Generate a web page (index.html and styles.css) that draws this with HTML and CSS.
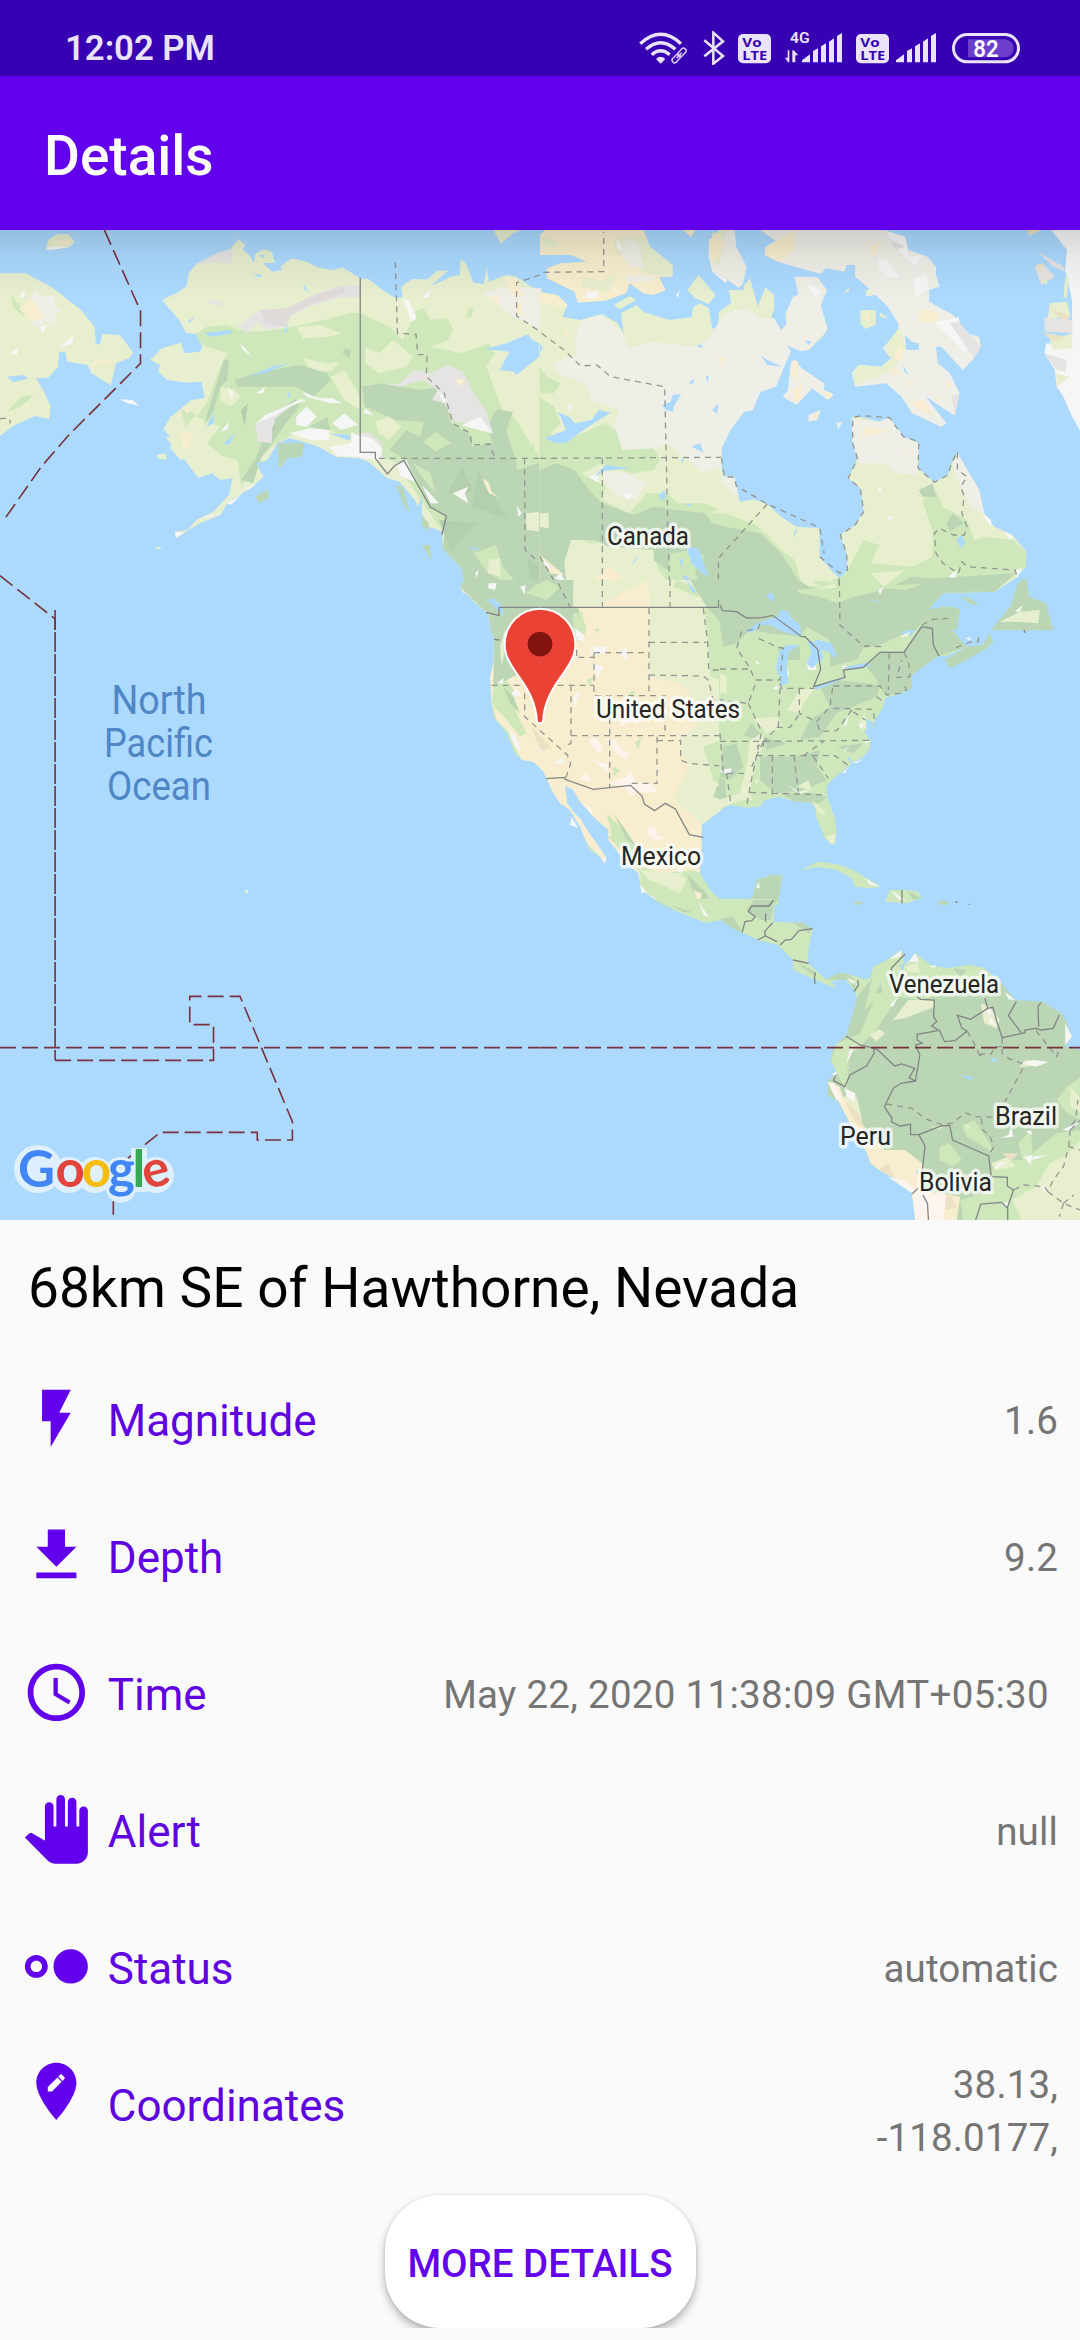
FILE: index.html
```html
<!DOCTYPE html>
<html lang="en">
<head>
<meta charset="utf-8">
<title>Details</title>
<link rel="stylesheet" href="styles.css">
</head>
<body>
<div class="screen">
  <header class="statusbar">
    <span class="clock">12:02 PM</span>
    <div class="indicators">
      <svg class="wifi" viewBox="118 92 146 104">
        <g fill="none" stroke="#ebe3f9" stroke-width="10">
          <path d="M122 130Q183 74 244 130"/><path d="M139 147Q183 108 227 147"/><path d="M156 163Q183 140 210 163"/>
        </g>
        <path d="M169 176Q183 163 197 176L183 190Z" fill="#ebe3f9"/>
        <g fill="none" stroke="#3700b3" stroke-width="12"><rect x="214" y="157" width="48" height="17" rx="8" transform="rotate(-47 238 165)"/></g>
        <g fill="none" stroke="#d7c8f2" stroke-width="4.5" transform="rotate(-47 238 165)"><rect x="211" y="158" width="29" height="15" rx="7"/><rect x="236" y="158" width="29" height="15" rx="7"/><path d="M227 165.500h22"/></g>
      </svg>
      <svg class="bt" viewBox="308 92 66 104"><path d="M312 120L368 167L339 190V97L368 123L312 168" fill="none" stroke="#ebe3f9" stroke-width="7.500"/></svg>
      <svg class="volte" viewBox="414 92 99 104"><rect x="414" y="101" width="99" height="88" rx="15" fill="#ebe3f9"/><text x="427" y="139" class="vo" textLength="58" lengthAdjust="spacingAndGlyphs">Vo</text><text x="427" y="179" class="vo" textLength="75" lengthAdjust="spacingAndGlyphs">LTE</text></svg>
      <svg class="sig4" viewBox="555 92 172 104">
        <text x="570" y="128" class="g4" textLength="59" lengthAdjust="spacingAndGlyphs">4G</text>
        <path d="M555 172h8v-22h5v36h-4zM577 186v-36h4l14 15h-9v21z" fill="#ebe3f9"/>
        <path d="M606 186v-6l24-18v24zM639 186v-34l15-8v42zM663 186v-48l15-9v57zM687 186v-62l15-10v72zM711 186v-79l15-9v88z" fill="#ebe3f9"/>
      </svg>
      <svg class="volte" viewBox="414 92 99 104"><rect x="414" y="101" width="99" height="88" rx="15" fill="#ebe3f9"/><text x="427" y="139" class="vo" textLength="58" lengthAdjust="spacingAndGlyphs">Vo</text><text x="427" y="179" class="vo" textLength="75" lengthAdjust="spacingAndGlyphs">LTE</text></svg>
      <svg class="sig" viewBox="606 92 121 104"><path d="M606 186v-6l24-18v24zM639 186v-34l15-8v42zM663 186v-48l15-9v57zM687 186v-62l15-10v72zM711 186v-79l15-9v88z" fill="#ebe3f9"/></svg>
      <svg class="batt" viewBox="1056 92 204 104"><rect x="1060.500" y="102.500" width="195" height="82" rx="41" fill="none" stroke="#ebe3f9" stroke-width="9"/><path d="M1104 117h110a27 27 0 0 1 0 54h-110z" fill="#6b3fcb"/><text x="1120" y="170" class="pct" textLength="76" lengthAdjust="spacingAndGlyphs">82</text></svg>
    </div>
  </header>
  <div class="appbar"><h1>Details</h1></div>

  <div class="map">
  <svg class="mapart" viewBox="0 230 1080 990" preserveAspectRatio="none">
    <defs>
      <linearGradient id="shade" x1="0" y1="0" x2="0" y2="1"><stop offset="0" stop-color="#000" stop-opacity=".13"/><stop offset=".4" stop-color="#000" stop-opacity=".05"/><stop offset="1" stop-color="#000" stop-opacity="0"/></linearGradient>
    </defs>
    <rect y="230" width="1080" height="990" fill="#acdaff"/>

    <!-- Siberia, Alaska, Yukon -->
    <g transform="translate(0 230) scale(.34439 .33333)">
      <g class="lt">
        <path d="M0 130L75 130L155 175L235 240L275 290L278 340L290 345L297 312L348 315L387 368L375 385L337 400L322 466L265 430L255 405L225 400L195 395L190 365L172 367L168 412L140 443L105 445L125 480L147 528L143 567L100 558L35 590L0 618Z"/>
        <path d="M133 60L140 30L165 13L198 12L217 35L205 50L165 57Z"/>
        <path d="M470 210L520 185L542 168L548 130L570 102L630 70L665 62L693 27L712 45L705 60L725 75L738 100L742 70L765 58L790 65L795 90L810 115L830 95L850 85L895 97L920 112L965 120L995 112L1045 145L1072 148L1110 180L1150 205L1170 200L1165 170L1195 148L1240 148L1270 122L1300 122L1260 160L1245 170L1310 140L1335 135L1338 87L1352 100L1375 158L1405 162L1413 112L1420 155L1470 135L1500 140L1572 190L1572 1200L1430 1200L1415 1150L1380 1120L1335 1070L1350 1060L1340 1015L1285 955L1285 905L1245 890L1222 850L1205 810L1160 755L1125 745L1070 695L1040 685L975 680L925 650L880 635L840 625L805 640L780 685L755 705L765 740L735 770L710 785L660 820L640 855L580 880L510 925L508 905L545 900L570 870L620 845L665 795L675 745L640 750L615 730L575 743L572 715L560 680L525 690L495 655L497 625L475 598L495 560L515 545L555 510L595 505L585 455L545 458L485 450L460 425L465 405L436 390L470 355L525 338L535 370L580 365L588 350L570 312L540 308L520 270Z"/>
        <path d="M455 675L480 670L485 688L460 688ZM452 950L470 952L460 960ZM1433 0L1515 0L1490 10L1455 42Z"/>
      </g>
      <path class="gr" d="M570 312L600 290L660 285L700 300L760 305L850 290L960 265L1020 248L1046 250L1070 262L1130 290L1170 330L1210 240L1230 235L1250 270L1300 265L1315 300L1300 330L1250 350L1340 370L1420 340L1435 370L1410 400L1425 450L1460 540L1500 570L1540 640L1572 690L1572 1000L1340 1000L1285 905L1150 700L1070 660L960 600L860 610L800 640L740 700L700 770L690 690L650 680L600 640L640 590L570 560L600 520L640 410L660 370L600 350L575 330Z"/>
      <path class="gr" d="M1360 235L1375 232L1370 260L1355 262ZM30 195L60 230L90 225L70 260L40 235ZM60 500L100 495L60 530L20 545ZM525 540L570 550L540 590ZM1330 380L1440 370L1400 420Z"/>
      <path class="lt" d="M860 290L930 285L990 310L960 320L880 325ZM880 385L950 400L985 395L960 425L900 420ZM960 440L1000 420L1046 500L1046 540L1000 510ZM640 470L680 480L700 500L670 530L640 510ZM1060 350L1100 370L1140 330L1200 380L1180 410L1100 430L1060 400ZM1090 575L1130 560L1165 590L1130 630L1100 610ZM480 620L560 630L600 690L640 700L615 730L575 743L530 680Z"/>
      <path class="dk" d="M650 390L665 390L660 450L640 470L620 540L595 585L600 560ZM680 450L740 430L870 405L950 430L960 450L910 500L860 470L780 470L690 470ZM1000 355L1020 360L1015 385L995 370ZM790 560L860 505L870 530L830 580L790 640L760 680L735 760L700 750L740 690ZM1050 470L1110 460L1220 480L1280 470L1300 540L1310 580L1370 620L1370 650L1430 640L1415 590L1440 540L1490 545L1470 600L1500 700L1572 700L1572 1150L1415 1150L1335 1070L1350 1060L1340 1015L1285 955L1297 860L1250 830L1180 690L1130 660L1180 600L1220 620L1230 575L1150 570L1060 530ZM805 640L885 640L875 680L835 685L810 718ZM1150 765L1170 770L1190 850L1175 830ZM1225 855L1245 880L1245 905L1225 885ZM1225 945L1248 945L1253 990ZM740 800L775 780L783 800L755 820ZM900 590L950 560L960 600Z"/>
      <path class="gr" d="M1230 635L1265 605L1310 640L1265 665ZM1375 970L1440 945L1460 1010L1500 1060L1450 1050L1410 1020ZM1200 700L1250 730L1265 790L1225 740ZM1500 660L1550 640L1560 700L1500 720Z"/>
      <path class="dk2" d="M1340 710L1375 780L1340 800L1300 790ZM1390 720L1475 870L1400 840L1370 830ZM1275 870L1385 880L1310 965ZM790 560L800 600L775 600ZM1450 1070L1480 1060L1490 1110L1450 1100ZM1530 980L1568 1010L1568 1100L1540 1060ZM700 540L720 520L710 590Z"/>
      <path class="lt" d="M1420 990L1450 985L1455 1040L1415 1030ZM1525 850L1572 845L1572 905L1530 900Z"/>
      <path class="rock" d="M570 102L630 70L678 55L670 102L630 95ZM600 212L640 212L650 230L610 222ZM690 290L720 265L755 240L830 238L880 210L930 185L1000 165L1046 168L1046 200L980 205L900 230L840 260L830 290L770 300L750 275L720 310ZM740 580L790 545L870 510L800 565L790 600L790 640L750 635ZM1040 610L1075 608L1110 640L1110 690L1040 685ZM1110 460L1160 462L1200 420L1250 430L1300 405L1345 425L1375 490L1410 540L1432 610L1390 600L1370 580L1320 575L1290 520L1255 510L1270 480L1230 450L1160 470Z"/>
      <path class="ice" d="M1405 190L1460 170L1572 175L1572 300L1490 260ZM75 235L100 180L120 200L160 195L160 230L180 235L160 255L160 290L130 275L110 290L90 280Z"/>
      <path class="mauve" d="M755 240L830 235L930 190L1000 170L1000 190L900 225L845 255L830 290L770 280Z"/>
      <path class="wh" d="M695 335L733 380L705 360ZM640 605L665 575L660 600L615 610ZM745 580L770 555L830 530L870 508L890 510L840 530L800 555ZM860 560L890 530L920 560L890 590L860 585ZM880 485L925 505L965 505L995 520L960 520L890 500ZM840 610L900 595L955 600L955 630L900 630ZM955 650L1020 640L1020 605L1046 620L1046 680L980 678ZM965 580L1000 550L1040 585L990 600ZM1045 615L1080 625L1110 655L1105 690L1046 685ZM1060 535L1085 555L1055 550ZM508 905L535 908L512 922ZM580 865L640 850L610 862ZM660 820L700 795L670 825ZM710 775L740 765L720 780ZM1170 205L1190 215L1210 265L1195 275ZM1225 765L1275 820L1250 820ZM1150 700L1180 690L1205 755L1165 740ZM1270 485L1300 500L1290 520ZM1340 585L1395 560L1430 610L1390 600ZM1315 790L1360 770L1350 790L1360 820ZM1500 825L1515 850L1505 860ZM1380 1030L1390 1018L1385 1045ZM1412 1060L1445 1065L1435 1080ZM1510 1070L1525 1065L1522 1095ZM348 508L385 510L404 527L370 520ZM55 200L75 178L70 205ZM170 355L215 312L210 340ZM115 290L135 285L125 310ZM135 60L150 50L205 50L165 57ZM660 470L678 490L672 510ZM30 370L52 350L50 375ZM1225 205L1250 175L1245 200ZM745 490L770 470L765 490Z"/>
      <path class="sand" d="M55 235L90 205L130 260L90 275ZM525 610L558 608L552 640L530 640ZM525 640L555 645L535 665ZM1465 140L1500 145L1520 200L1480 190ZM1500 220L1520 215L1515 260L1500 250ZM1400 745L1418 755L1428 785L1445 800L1420 790ZM1320 450L1350 445L1340 470ZM160 35L200 25L205 40L180 48ZM260 405L310 385L330 395ZM530 530L550 530L545 555ZM1410 200L1450 195L1450 220Z"/>
      <path class="wt" d="M1405 358L1470 340L1535 312L1540 325L1572 345L1572 375L1530 410L1500 435L1492 425L1450 420L1480 365ZM20 440L70 435L82 445L40 457ZM735 130L760 135L755 145ZM750 75L770 75L765 85ZM765 100L800 98L820 120L790 125ZM880 160L895 185L885 180ZM545 275L567 258L550 280ZM590 310L670 300L675 310L615 320ZM825 305L837 280L832 310ZM720 440L790 410L840 400L770 428ZM835 505L838 480L843 500ZM600 590L620 545L620 580ZM650 640L685 610L665 645ZM955 610L1015 615L1015 632ZM1355 955L1400 953L1380 960ZM1415 1100L1450 1120L1465 1160L1440 1130ZM745 700L780 690L760 735ZM1205 850L1225 800L1225 860Z"/>
      <path class="bd" d="M1046 143V667H1090V685L1125 732L1145 708L1173 691L1250 832L1296 858L1283 915M1412 1148L1447 1156V1132H1570"/>
      <path class="dash" d="M1148 97L1154 310L1208 313L1213 374H1240L1238 440L1290 490L1315 580L1365 610L1370 645L1422 642L1437 685M1100 685H1570M1523 685L1525 960L1568 1000M1568 135L1500 158V258L1568 305M0 566L28 565L30 580"/>
      <path class="lim" d="M303 0L408 243V400L200 615L120 710L8 875M0 1037L160 1167V1200"/>
    </g>

    <!-- Canadian Arctic, Hudson Bay, Greenland -->
    <g transform="translate(540 230) scale(.34439 .33333)">
      <path class="lt" d="M-2 185L50 195L80 225L65 260L115 270L180 252L225 280L243 310L235 250L280 225L300 245L375 270L440 262L445 230L465 220L490 235L500 295L515 297L520 245L555 220L548 180L580 180L610 145L622 190L632 230L655 172L680 195L680 235L672 260L700 300L715 285L712 245L718 240L735 200L750 195L740 140L805 142L833 180L815 225L818 260L835 295L825 315L780 360L755 362L715 345L728 365L700 405L705 420L685 470L640 485L620 510L618 540L592 545L550 605L527 655L527 710L535 740L565 740L580 815L620 808L660 822L700 860L745 890L812 895L812 980L850 1025L870 1045L893 1020L890 970L872 915L915 885L940 845L930 775L895 745L922 685L908 640L905 565L915 557L985 575L1015 563L1055 620L1100 640L1098 715L1145 757L1185 735L1195 700L1212 668L1240 720L1275 780L1290 850L1320 890L1372 915L1412 965L1410 1010L1380 1045L1320 1085L1170 1090L1120 1120L1060 1200L-2 1200Z"/>
      <path class="ice" d="M115 275L180 255L240 310L255 355L320 335L450 350L490 320L540 250L600 235L640 265L680 265L700 300L715 285L718 240L735 200L750 195L740 140L805 142L833 180L815 225L835 295L780 360L755 362L715 345L728 365L705 420L685 470L640 485L618 540L592 545L550 605L527 655L527 740L565 740L575 800L530 760L520 710L470 730L430 690L370 640L310 670L240 660L210 600L230 540L150 510L130 460L50 430L40 400L110 370L100 340ZM905 565L985 575L1015 563L1055 620L1100 640L1095 735L1040 730L1000 700L925 700L908 640ZM1200 700L1212 668L1275 780L1290 850L1250 830L1210 740ZM180 725L250 730L310 760L280 810L230 800L190 760Z"/>
      <g class="ice">
        <path d="M490 40L520 0L565 0L570 50L600 110L585 180L545 150L500 125L490 80Z"/>
        <path d="M640 0L990 0L1060 20L1070 60L1125 80L1150 110L1150 135L1160 170L1130 180L1130 215L1200 255L1240 310L1275 320L1280 350L1260 385L1228 420L1165 350L1150 350L1155 400L1190 430L1218 490L1205 557L1120 500L1180 580L1165 590L1080 550L1050 500L1005 460L915 470L905 430L925 405L990 410L1020 385L995 355L1040 310L1040 280L1010 230L975 195L945 200L955 175L915 140L915 105L890 105L885 125L830 115L815 132L740 110L690 95L652 75L655 50L700 45Z"/>
        <path d="M738 388L760 415L825 460L825 480L853 495L835 510L790 475L745 525L705 500L720 480L728 400Z"/>
        <path d="M780 555L815 540L805 570L780 575ZM860 578L878 576L866 600Z"/>
      </g>
      <path class="sand" d="M0 15L15 0L300 0L320 50L385 105L385 140L345 140L365 180L330 195L300 190L260 160L250 190L190 212L110 218L100 185L20 145L20 115L60 100L135 95L90 75L0 75ZM-2 190L50 195L80 225L60 235L0 215ZM415 0L450 0L440 22Z"/>
      <path class="lt" d="M0 20L30 25L60 50L20 50ZM215 20L300 20L320 50L385 105L385 140L300 130L260 90L215 60ZM120 140L180 150L220 130L200 190L120 170ZM428 180L460 135L510 195L490 222L450 205ZM930 240L975 240L975 285L945 297L930 280ZM880 190L900 170L895 185ZM985 245L1010 265L990 262ZM1000 350L1045 290L1060 350L1040 400L1010 430L915 465L908 430L925 405L990 410L1020 385ZM215 225L260 198L280 210L230 238ZM945 180L970 185L950 198ZM500 10L540 0L520 110L497 90Z"/>
      <path class="ice" d="M230 60L260 20L290 50L300 110L260 110ZM250 135L340 140L320 155L250 155Z"/>
      <path class="sand" d="M690 30L740 0L740 60L700 95L655 75L655 50ZM490 30L520 10L540 40L500 100ZM960 50L990 30L970 80ZM1095 275L1110 235L1160 250L1155 280ZM1030 360L1050 345L1055 385L1030 395ZM1070 515L1110 510L1150 560L1100 535ZM735 390L750 395L745 445L727 440ZM735 475L760 465L760 500L742 522ZM820 480L850 490L840 508ZM785 560L812 545L805 565ZM938 260L955 250L955 280ZM1010 415L1045 420L1030 445ZM1060 450L1085 455L1070 470ZM1175 460L1190 455L1190 480ZM1150 495L1165 505L1155 515ZM520 380L540 385L530 415ZM70 300L90 310L75 325ZM1050 655L1065 660L1055 670ZM945 590L1020 600L930 625Z"/>
      <path class="wh" d="M980 85L1010 90L1045 145L1010 140L985 115ZM1145 275L1185 270L1215 260L1225 310L1250 340L1235 370L1200 330L1160 295ZM1085 150L1120 130L1130 175L1090 200ZM1000 0L1060 20L1070 80L1110 75L1090 110L1040 60ZM135 185L168 185L165 205L135 205ZM225 25L240 60L222 55ZM395 195L405 180L402 205ZM1485 0L1572 0L1572 610L1545 560L1520 500L1500 470L1495 420L1465 370L1470 340L1545 350L1545 210L1525 120L1530 60ZM110 755L170 730L170 785ZM240 790L270 795L255 812ZM980 780L993 768L988 790ZM1200 940L1240 945L1230 960L1195 955ZM1280 848L1310 870L1310 890ZM1350 905L1375 920L1365 930ZM1010 860L1025 855L1015 875ZM225 860L238 848L230 875ZM585 980L600 975L595 995ZM80 530L92 520L88 550ZM200 165L220 180L230 195ZM500 125L545 150L540 160ZM770 160L820 180L800 200Z"/>
      <path class="rock" d="M1445 65L1520 110L1525 125L1490 110ZM1437 110L1460 100L1495 140L1455 165ZM1465 260L1545 270L1545 310L1465 305ZM1465 370L1530 390L1525 425L1500 420ZM1190 280L1215 275L1280 350L1260 385ZM1020 30L1060 50L1030 60ZM1195 500L1218 490L1205 557Z"/>
      <path class="lt" d="M1480 220L1530 215L1540 260L1475 265ZM1480 330L1545 310L1545 355L1490 360ZM1500 430L1540 440L1500 470ZM1525 140L1535 140L1530 205L1520 200ZM1455 150L1475 150L1470 165Z"/>
      <path class="beige" d="M1470 228L1540 260L1525 275ZM1462 308L1530 320L1490 335ZM1440 105L1462 100L1455 135ZM1415 0L1455 0L1420 18Z"/>
      <path class="gr" d="M-2 500L40 530L60 580L30 610L60 640L100 620L190 580L220 600L240 660L330 655L350 690L330 720L270 730L200 710L180 700L120 730L190 770L180 810L260 850L310 790L370 790L400 820L480 820L540 850L620 880L680 930L740 990L760 1060L870 1045L893 1020L940 930L985 945L960 1000L1080 1010L1140 980L1140 900L1110 810L1150 780L1170 830L1240 870L1260 930L1290 920L1372 930L1412 965L1410 1010L1320 1085L1170 1090L1090 1170L-2 1200ZM-2 410L20 440L60 460L40 490L0 490Z"/>
      <path class="lt" d="M490 850L540 850L640 890L700 960L740 990L760 1060L820 1090L860 1070L840 1030L700 860L580 815ZM150 940L270 930L330 960L340 1010L390 1090L480 1100L500 1132L500 1200L-2 1200L-2 950L80 920ZM1000 1070L1060 1020L960 1030ZM770 1040L860 1060L790 1080Z"/>
      <path class="dk" d="M-2 720L50 700L100 720L150 790L180 820L270 855L330 830L400 840L480 850L500 880L540 890L640 910L700 970L750 1050L830 1100L900 1110L1000 1080L1080 1040L1140 1045L1220 1040L1380 1030L1320 1085L1170 1090L1120 1150L1060 1200L500 1200L480 1130L450 1020L480 980L440 960L380 970L370 1020L330 990L330 960L200 950L160 930L90 930L70 1000L85 1130L-2 1130ZM1100 780L1140 760L1150 800L1110 800ZM1180 880L1200 850L1230 880L1190 905ZM1310 1200L1380 1110L1412 1040L1420 1100L1470 1120L1490 1200ZM1110 1140L1200 1130L1220 1140L1210 1200L1060 1200ZM1220 1100L1270 1120L1255 1125Z"/>
      <path class="sand" d="M120 1132L180 1080L160 1040L200 1010L240 1040L230 1080L310 1110L300 1200L110 1200ZM0 975L30 1000L70 1035L30 1030Z"/>
      <path class="lt" d="M0 850L25 848L25 895L0 890ZM1340 1165L1450 1150L1450 1178L1370 1178Z"/>
      <path class="wh" d="M40 1045L60 1030L75 1055ZM1185 1040L1210 1020L1205 1045ZM1380 1020L1400 1015L1385 1045ZM1370 1150L1400 1125L1390 1145ZM0 980L30 1010L20 1015Z"/>
      <path class="wt" d="M15 625L75 600L60 560L50 545L85 560L100 580L150 570L170 540L205 548L140 590L75 640L45 640ZM355 525L380 515L385 495L410 492L388 530L388 545L365 540ZM500 540L518 520L514 552ZM640 375L660 390L703 410L660 405ZM432 460L447 445L445 462ZM480 435L490 440L487 460ZM455 350L465 342L475 353ZM158 740L190 705L260 715L190 722ZM345 795L362 780L365 800L355 815ZM440 650L465 640L475 668ZM410 685L418 690L412 700ZM425 825L440 820L435 830ZM425 950L460 955L490 1040L470 1030L440 1000ZM412 1035L430 1040L455 1085L445 1088ZM405 985L415 990L413 1020ZM265 1005L283 978L280 990ZM1060 315L1080 335L1100 340L1100 360L1062 360ZM1055 405L1070 435L1058 425ZM1210 930L1225 915L1235 940L1220 955ZM770 330L790 335L780 345ZM575 175L592 160L590 182ZM655 1100L670 1085L683 1100L675 1118ZM735 930L740 900L748 895ZM960 1110L985 1115L985 1122ZM0 340L8 350L0 370Z"/>
      <path class="dash" d="M10 127L185 125V5M5 310L70 360L118 408L165 405L205 440L362 470L370 840L378 1132M0 685L527 682M181 685V1132M527 685L535 740L565 742L570 768L660 822L812 893L825 970M660 822L518 985V1118M812 980L870 1030L893 1020L890 970L872 915L915 885L940 845L930 775L895 745L922 685L908 640V562L935 557L1015 563L1055 620L1100 635L1098 715L1145 757L1185 735L1195 700L1212 665L1212 720L1240 740L1222 770L1232 800L1225 850L1240 890L1232 915L1200 915L1160 895L1145 910L1150 970L1170 1000L1215 1030L1225 995L1240 1010L1380 1020L1385 1040M868 1045L872 1200M316 1140V1200M472 1132L480 1200M0 980L85 1130M1130 1170L1195 1165"/>
      <path class="bd" d="M0 1132H518V1118L530 1140L570 1145L600 1165L675 1158L735 1200"/>
    </g>

    <!-- Western US and Mexico -->
    <g transform="translate(360 580) scale(.33333)">
      <path class="sand" d="M300 20L330 50L350 70L380 90L385 100L390 140L402 175L400 250L390 290L395 370L410 420L445 455L465 505L485 540L520 545L550 575L580 640L600 670L630 690L660 740L680 790L720 830L735 850L740 835L710 790L685 755L660 715L640 695L622 670L618 640L615 618L640 630L660 665L700 710L745 750L745 780L800 850L835 880L845 930L880 955L930 980L1000 1010L1040 1028L1085 1015L1085 965L1050 930L1020 900L1020 860L1025 790L1025 735L1085 685L1085 40L310 40Z"/>
      <path class="dk" d="M300 20L312 0L640 0L640 82L655 85L670 130L650 180L580 290L480 280L440 300L400 320L402 175L390 140L385 100L350 70Z"/>
      <path class="gr" d="M520 20L560 0L600 20L560 60L500 40ZM400 320L440 300L460 330L470 400L500 460L480 470L440 420L410 390L396 370ZM640 100L665 95L680 150L660 190L640 160ZM740 700L770 730L820 790L850 860L900 880L1000 870L1020 880L1050 930L1085 965L1085 1020L1040 1028L930 980L845 930L840 880L800 830L745 770L755 765ZM395 370L410 420L445 455L480 535L465 520L440 460L400 410ZM700 150L715 145L720 160ZM680 300L700 290L690 320ZM825 490L845 470L835 510ZM680 790L690 810L720 830ZM760 560L780 570L760 590ZM870 240L885 245L860 260ZM805 340L825 330L820 350Z"/>
      <path class="lt" d="M420 200L435 150L440 180L425 260ZM870 82L1085 82L1085 690L1025 735L990 700L940 660L960 610L990 560L960 500L960 470L1010 440L1000 400L990 340L960 310L870 290ZM700 0L870 0L860 40L760 70L640 80L640 20ZM870 0L1085 0L1085 82L870 82ZM840 870L960 880L980 900L960 940L870 900Z"/>
      <path class="gr" d="M1035 82L1085 82L1085 300L1050 290ZM1030 500L1085 480L1085 620L1060 600ZM950 0L1050 40L1010 50L940 20Z"/>
      <path class="dk" d="M990 0L1085 0L1085 130L1040 80ZM1070 620L1085 610L1085 660L1060 650ZM430 320L460 350L480 400L450 370ZM390 0L480 0L470 40L400 30ZM760 700L790 740L830 800L800 780ZM980 880L1010 910L1040 940L1060 990L1000 940ZM880 960L940 975L930 985Z"/>
      <path class="sand" d="M780 60L860 40L830 20L780 40ZM690 90L865 85L865 0ZM1000 930L1025 940L1020 980Z"/>
      <path class="wh" d="M455 340L470 325L485 345L460 350ZM645 145L672 165L670 185L650 180ZM690 200L740 200L735 220L700 225ZM695 250L730 260L715 295ZM775 215L800 205L800 245ZM640 350L660 330L645 385ZM445 450L465 465L485 515L465 500ZM580 550L610 530L610 552ZM535 500L550 505L545 525ZM700 540L745 555L740 575ZM480 20L497 15L495 45ZM385 10L410 10L405 30L385 25ZM840 915L860 935L845 940ZM1015 970L1030 985L1045 1015L1025 1000ZM950 870L970 860L965 880ZM630 735L635 710L655 745ZM725 835L740 835L733 850ZM410 310L430 295L430 310ZM670 280L710 190L700 200Z"/>
      <path class="pink" d="M685 480L710 475L730 510L715 520ZM735 475L765 480L785 510L810 520L800 540L770 520ZM745 610L800 590L810 570L830 610L870 610L895 635L860 640L830 630L820 650L790 620ZM865 740L890 745L890 765L925 778L880 778L865 765ZM670 670L700 690L695 705ZM790 400L810 380L840 405L850 415L830 430L810 425L780 440ZM670 580L690 590L690 605L660 600Z"/>
      <path class="beige" d="M515 440L545 470L570 500L545 515L530 480Z"/>
      <path class="wt" d="M380 60L400 55L425 75L433 115L420 95ZM980 0L1010 40L995 35Z"/>
      <path class="bd" d="M378 97L417 106V82H1076V60L1085 85M402 178L418 180M558 596L615 592V598L700 628L812 616L846 648L853 672L884 692L916 670L946 687L988 764L1030 772"/>
      <path class="dash" d="M727 0V80M930 0V80M595 10L630 80M867 85V347M867 187H1040M1030 85L1043 187L1046 270H1085M867 285L1030 288L1045 300L1060 360H1085M702 218H867M702 218V347H915V467M655 232H702M650 210V232M395 316H702M494 340V410L600 505L622 525L632 550L618 592M633 316V490L612 500M633 467H1085M749 347V625M891 470V610H815M891 482H962V540L985 550L1085 558"/>
    </g>

    <!-- Eastern US, Caribbean -->
    <g transform="translate(720 580) scale(.33333)">
      <path class="gr" d="M-3 40L850 0L810 33L670 38L600 100L545 165L570 170L620 110L665 78L720 88L715 115L695 125L700 155L715 175L740 200L680 228L655 228L620 245L575 285L575 325L545 340L495 355L488 385L465 420L460 445L440 425L435 460L450 480L450 505L430 530L395 550L330 605L318 625L325 660L345 715L350 755L345 790L335 795L315 775L290 715L285 680L265 665L225 665L175 650L135 660L120 680L80 683L30 675L-3 690Z"/>
      <path class="dk" d="M-3 -5L200 0L240 40L300 50L350 70L400 50L450 40L500 25L560 30L640 0L850 0L810 33L670 38L600 100L545 165L480 195L430 205L410 240L370 250L330 260L330 180L260 140L240 170L150 160L90 150L50 190L10 200L-3 120ZM655 228L575 285L575 325L545 340L495 345L470 300L440 260L480 215L550 215L600 140L620 110L665 78L720 88L715 115L695 125L700 155L740 200ZM300 320L350 300L480 315L470 350L400 380L350 400L300 470L240 480L270 420L330 380ZM120 530L230 530L300 510L290 560L320 600L250 630L170 640L120 600ZM10 500L50 490L70 560L30 600L0 590ZM180 640L280 640L320 650L300 670L225 665ZM130 470L200 490L140 510ZM95 430L120 460L100 475L70 465ZM350 500L430 490L400 520ZM170 200L240 200L240 240L190 240ZM-3 590L15 600L20 680L-3 690Z"/>
      <path class="dk" d="M675 240L740 200L790 195L808 160L820 185L795 208L740 240L690 265ZM838 125L870 90L880 50L895 10L912 -5L915 45L970 72L965 100L990 125L980 155L960 130L920 155L900 130ZM720 50L750 55L778 77L760 72ZM395 962L435 968L410 975ZM655 962L683 962L683 974L655 974Z"/>
      <path class="lt" d="M840 125L900 95L960 90L955 130L880 125ZM90 480L130 460L130 500L100 560L90 640L100 660L70 660L30 672L-3 690L-3 660L60 640L80 560ZM200 390L240 330L290 320L250 370L240 400ZM100 415L170 410L190 440L140 460ZM0 280L20 290L20 340L0 340ZM270 0L300 20L260 15ZM275 660L310 690L320 705L295 700ZM320 770L345 760L345 790L330 790ZM435 400L440 450L415 430ZM230 620L265 600L275 630Z"/>
      <path class="gr" d="M245 872L290 845L350 852L400 870L440 895L485 920L450 925L405 920L395 895L350 870L290 860ZM510 930L560 930L595 935L605 955L560 970L495 965ZM-8 968L95 960L110 900L155 885L187 887L175 960L175 975L-8 990ZM520 190L570 155L560 200Z"/>
      <path class="dk" d="M110 900L155 885L187 887L175 960L155 985L95 965ZM560 930L605 955L580 960Z"/>
      <path class="wh" d="M108 925L115 905L120 925ZM105 240L120 250L112 255ZM160 328L168 315L180 328ZM260 245L270 262L285 250L290 270L265 270ZM365 258L380 255L370 270ZM540 170L570 155L560 168ZM0 570L35 565L32 580L5 578ZM200 615L240 635L270 630L240 642ZM370 440L388 400L380 435ZM415 435L430 430L428 450ZM735 175L750 172L755 182ZM885 95L908 75L900 95ZM435 895L480 920L450 915ZM512 930L560 962L535 958ZM105 605L115 598L112 610ZM435 478L450 485L435 490ZM370 510L390 500L375 512ZM365 580L385 562L375 580ZM400 548L428 537L410 550ZM200 265L208 280L203 290ZM475 30L490 22L480 45Z"/>
      <path class="wt" d="M75 158L110 130L170 110L185 88L205 95L215 115L240 135L245 170L190 155L150 135L120 135L100 155ZM175 290L168 260L178 215L200 195L240 195L205 215L200 260L205 310L180 318L182 280ZM262 180L300 190L310 235L275 265L260 250L275 215ZM285 178L335 190L350 225L345 235L325 215L290 205ZM370 262L440 248L455 255L400 270ZM285 318L340 300L380 292L320 318L285 330ZM138 48L152 36L165 50L155 65ZM450 58L480 65L475 70ZM382 525L398 545L390 550ZM438 415L445 450L455 450L460 430Z"/>
      <path class="bd" d="M0 75L8 92L50 95L80 114L125 113L158 106L245 170L255 170L293 208L302 268L281 320L375 292L370 270L430 262L480 217H552L605 140L637 145L640 195L657 228M546 930V970M705 965L713 967M747 972L750 974M912 150L915 158"/>
      <path class="dash" d="M358 0L360 135L430 198L482 200V215M120 130L115 145L65 155L50 205L90 265L105 300H180L190 205L170 200L115 175M0 267H90M105 315L85 370L0 360M85 370L125 455L90 620L80 680M180 310L185 325H283M180 325L175 440L130 485L110 500M238 325V400L290 425L330 380L340 310M170 442H210L240 400M340 318H480L500 345L540 340L560 330L553 316M340 385L460 388L465 435M395 390L350 452L300 455L290 425M0 484H130L450 481M110 527H345L390 560M130 485L95 560M157 527V655M222 527L235 638M280 530L325 595M250 527L310 485M90 637L320 645M0 460L10 580H75M20 580L32 670M508 220L505 330M552 218L565 240L570 290L530 292L545 240M470 350L490 365M605 135L640 118L690 115M708 203L760 183L775 185V170M130 485V500M400 395L435 420"/>
    </g>

    <!-- Equator and date line -->
    <g transform="translate(0 900) scale(.34439 .33333)">
      <path class="lim2" d="M160 -870V480"/>
      <path class="lim" d="M0 443H1570M160 481H620V374H551V289H697L849 665V720H747V697H465L329 810V944"/>
    </g>

    <!-- Central and South America -->
    <g transform="translate(540 900) scale(.34439 .33333)">
      <path class="gr" d="M330 -3L400 35L480 68L520 58L590 100L640 122L690 135L735 180L735 210L800 240L860 266L845 245L885 235L915 275L935 235L895 222L870 218L830 238L805 215L778 190L780 140L792 88L765 68L678 66L680 -3Z"/>
      <path class="dk" d="M600 30L620 0L680 0L670 60L640 60ZM735 68L765 68L792 88L780 100ZM830 238L870 218L895 222L915 240L860 240ZM895 240L920 260L915 275ZM740 185L800 215L800 230ZM380 15L440 35L420 38ZM520 58L560 50L590 100L560 85Z"/>
      <path class="dk" d="M915 275L925 240L960 235L968 200L1000 185L1050 150L1058 195L1070 185L1090 160L1110 178L1135 195L1180 205L1250 195L1290 205L1340 250L1380 300L1460 305L1520 345L1545 410L1525 440L1572 450L1572 962L1090 962L1080 880L1040 840L985 810L960 790L945 750L910 690L870 610L835 585L835 545L860 515L845 480L850 450L862 430L890 405L930 350L922 290Z"/>
      <path class="gr" d="M915 275L925 240L960 235L968 200L1000 185L1050 150L1058 195L1070 185L1090 160L1135 195L1180 205L1250 195L1290 205L1340 250L1100 300L1040 290L970 400L900 470L890 570L862 520L845 480L862 430L930 400L970 300L935 340ZM1572 530L1530 560L1500 600L1530 640L1572 660ZM1390 730L1425 690L1430 760L1500 700L1572 690L1572 962L1230 962L1220 900L1320 870L1310 810L1350 780L1400 780ZM1160 740L1190 730L1225 780L1200 800L1160 780ZM1225 680L1260 660L1300 720L1320 760L1240 710ZM1370 430L1400 450L1430 470ZM1130 680L1180 675L1160 690Z"/>
      <path class="dk" d="M922 290L965 235L940 340L890 405ZM975 280L990 250L995 278ZM970 410L1050 280L985 380L900 470L880 560L905 460ZM1200 205L1240 210L1220 230Z"/>
      <path class="lt" d="M1025 360L1070 300L1145 300L1145 320L1060 355ZM1060 200L1095 190L1105 220L1070 215ZM958 405L985 388L1002 400L975 425ZM1280 310L1305 320L1335 360L1325 385L1290 370ZM1390 500L1410 480L1475 485L1440 498ZM1370 900L1440 860L1480 790L1520 770L1572 720L1572 962L1400 962ZM1005 750L1050 750L1030 770ZM870 590L920 590L935 660L900 650ZM1540 560L1572 600L1572 640L1540 620ZM1230 670L1250 680L1245 690ZM1310 790L1360 770L1380 800L1320 810Z"/>
      <path class="sand" d="M835 545L870 560L880 590L920 640L940 690L1000 750L1060 750L1110 790L1110 870L1220 890L1210 962L1090 962L1080 880L1040 840L985 810L960 790L945 750L910 690L870 610Z"/>
      <path class="beige" d="M885 600L925 640L945 690L910 660ZM985 810L1010 790L1030 830ZM1165 900L1190 880L1210 920L1180 930ZM1340 760L1390 760L1370 780ZM850 570L870 590L860 600Z"/>
      <path class="pink" d="M835 545L855 550L880 610L860 600ZM1010 830L1060 840L1100 880L1180 885L1170 962L1090 962L1080 880Z"/>
      <path class="wh" d="M890 490L900 445L915 430L900 470ZM885 565L915 580L915 605L890 590ZM1070 185L1090 160L1100 185ZM1015 178L1050 150L1045 170ZM1015 315L1040 290L1025 320ZM1525 370L1545 410L1525 435ZM1400 490L1435 480L1475 487L1440 500ZM1405 770L1430 765L1425 795ZM1430 770L1475 765L1430 780ZM1515 690L1568 665L1540 692ZM1318 808L1360 785L1330 790ZM1295 330L1310 325L1305 370L1325 378ZM1350 275L1380 300L1360 298ZM1335 715L1360 705L1368 680L1375 710ZM1410 695L1425 690L1430 705ZM1345 910L1360 905L1355 925ZM890 230L915 245L905 250ZM850 520L862 515L855 540ZM1450 860L1475 865L1470 875ZM1130 200L1150 195L1145 203ZM460 5L490 50L475 45ZM1135 920L1150 925L1140 940Z"/>
      <path class="wt" d="M1305 475L1325 475L1325 490ZM1220 525L1262 532L1245 540ZM1090 815L1100 810L1098 825ZM1045 195L1058 190L1055 215Z"/>
      <path class="bd" d="M678 0L665 18H615L605 35L625 50L615 62L595 65L587 97M676 68L652 95L655 108L632 120M655 40V66M655 108L675 118L688 125M697 135L712 120L730 118L752 92L792 86M735 180L780 190M800 218L797 230L798 252M922 240L925 255L912 275M1060 162L1020 205L1025 240M1095 290L1105 298L1145 300L1143 350L1152 365L1137 378L1160 392L1175 425L1205 422L1240 393L1225 385L1212 346L1250 358L1300 325L1315 322L1325 360L1342 413L1408 398V390L1440 385L1455 390L1490 385L1508 345M1292 295L1300 325M1383 305L1360 347L1397 398M1455 308L1446 318L1448 380M1155 392L1095 403V420L1110 430L1090 435L1103 465L1090 543L1072 533L1088 505L1050 492L1030 498L978 447L930 435L888 408M970 445V460L948 498L900 525L885 560L852 542L858 525M1090 543L1048 550L1026 565L1000 620L1022 655L1020 665L1045 678L1076 673V704H1100L1118 738L1108 830M1100 704L1165 678L1190 676L1198 720L1303 768L1310 830L1357 832V858L1375 870L1358 920V960M1080 882L1098 865M1112 885L1125 910L1128 960M1265 960L1280 912L1340 907L1358 925"/>
      <path class="dash" d="M1240 393L1258 425L1280 475V462H1310L1320 440H1342M1342 413V460L1360 475L1398 490L1405 500L1350 605M1440 392L1500 470L1505 455M1005 612L1080 625L1120 657L1170 675L1200 668L1235 638L1265 650L1325 652M1282 655L1285 690L1305 705L1318 740L1303 768M1375 870L1405 855L1465 860L1475 875L1490 840L1520 800L1535 740L1568 750M1535 740L1540 680L1555 660L1562 600M1475 875L1520 910L1568 930M1540 690L1570 660M1520 910L1508 950M1520 910L1550 885"/>
      <path class="lim" d="M3 443H1570"/>
    </g>
    <rect x="245" y="890" width="3" height="3" fill="#e3efd2"/>
    <rect y="230" width="1080" height="70" fill="url(#shade)"/>

    <g class="lab">
      <text x="607" y="544.500" textLength="82" lengthAdjust="spacingAndGlyphs">Canada</text>
      <text x="596" y="717.500" textLength="144" lengthAdjust="spacingAndGlyphs">United States</text>
      <text x="621" y="865" textLength="80" lengthAdjust="spacingAndGlyphs">Mexico</text>
      <text x="889" y="992.500" textLength="110" lengthAdjust="spacingAndGlyphs">Venezuela</text>
      <text x="995" y="1125" textLength="62" lengthAdjust="spacingAndGlyphs">Brazil</text>
      <text x="840" y="1145" textLength="51" lengthAdjust="spacingAndGlyphs">Peru</text>
      <text x="919" y="1190.500" textLength="73" lengthAdjust="spacingAndGlyphs">Bolivia</text>
    </g>
    <g class="sea">
      <text x="111.500" y="714" textLength="95" lengthAdjust="spacingAndGlyphs">North</text>
      <text x="104" y="757" textLength="109" lengthAdjust="spacingAndGlyphs">Pacific</text>
      <text x="107" y="799.500" textLength="104" lengthAdjust="spacingAndGlyphs">Ocean</text>
    </g>
    <g transform="translate(360 580) scale(.33333)">
      <path d="M540 427C532 427 533 418 532 405C525 350 495 310 470 275C445 238 437 220 437 192A103 103 0 0 1 643 192C643 220 635 238 610 275C585 310 555 350 548 405C547 418 548 427 540 427Z" fill="#ea4335" stroke="#fff" stroke-width="12" paint-order="stroke"/>
      <circle cx="540" cy="192" r="37" fill="#821410"/>
    </g>
    <g class="halo">
      <circle cx="38" cy="1169" r="24"/><circle cx="69" cy="1175" r="18"/><circle cx="95" cy="1175" r="18"/><circle cx="121" cy="1175" r="18"/><circle cx="121" cy="1188" r="15"/><rect x="131" y="1148" width="16" height="44"/><circle cx="156" cy="1175" r="18"/>
    </g>
    <text class="google" y="1187"><tspan x="18" fill="#4285f4">G</tspan><tspan x="55.500" fill="#e0443a">o</tspan><tspan x="81.700" fill="#f5bc0c">o</tspan><tspan x="108" fill="#4285f4">g</tspan><tspan x="132.500" fill="#34a853">l</tspan><tspan x="146" fill="#e0443a" rotate="-14" dy="2.500">e</tspan></text>
  </svg>
  </div>

  <main class="content">
    <h2>68km SE of Hawthorne, Nevada</h2>
    <ul class="rows">
      <li><svg viewBox="0 0 24 24"><path d="M7 2v11h3v9l7-12h-4l4-8z"/></svg><span class="name">Magnitude</span><span class="val">1.6</span></li>
      <li><svg viewBox="0 0 24 24"><path d="M19 9h-4V3H9v6H5l7 7 7-7zM5 18v2h14v-2H5z"/></svg><span class="name">Depth</span><span class="val">9.2</span></li>
      <li><svg viewBox="0 0 24 24"><path d="M11.990 2C6.470 2 2 6.480 2 12s4.470 10 9.990 10C17.520 22 22 17.520 22 12S17.520 2 11.990 2zM12 20c-4.420 0-8-3.580-8-8s3.580-8 8-8 8 3.580 8 8-3.580 8-8 8zM12.500 7H11v6l5.250 3.150.75-1.230-4.500-2.670z"/></svg><span class="name">Time</span><span class="val time">May 22, 2020 11:38:09 GMT+05:30</span></li>
      <li><svg viewBox="0 0 24 24"><path d="M23 5.500V20c0 2.200-1.800 4-4 4h-7.300c-1.080 0-2.100-.43-2.850-1.190L1 14.830s1.260-1.230 1.300-1.250c.22-.19.49-.29.79-.29.22 0 .42.060.6.160.04.010 4.310 2.460 4.310 2.460V4c0-.83.67-1.500 1.500-1.500S11 3.170 11 4v7h1V1.500c0-.83.67-1.500 1.500-1.500S15 .67 15 1.500V11h1V2.500c0-.83.67-1.500 1.500-1.500s1.500.67 1.500 1.500V11h1V5.500c0-.83.67-1.500 1.500-1.500s1.500.67 1.500 1.500z"/></svg><span class="name">Alert</span><span class="val">null</span></li>
      <li><svg viewBox="0 0 24 24"><path d="M17 6c-3.310 0-6 2.690-6 6s2.690 6 6 6 6-2.690 6-6-2.690-6-6-6zM5 8c-2.210 0-4 1.790-4 4s1.790 4 4 4 4-1.790 4-4-1.790-4-4-4zm0 6c-1.100 0-2-.9-2-2s.9-2 2-2 2 .9 2 2-.9 2-2 2z"/></svg><span class="name">Status</span><span class="val">automatic</span></li>
      <li class="coords"><svg viewBox="0 0 24 24"><path d="M12 2C8.140 2 5 5.140 5 9c0 5.250 7 13 7 13s7-7.750 7-13c0-3.860-3.140-7-7-7zm-1.530 10H9v-1.500l3.380-3.380 1.480 1.500L10.470 12zm4.380-4.380-.7.720-1.490-1.490.72-.7c.15-.15.39-.15.54 0l.93.930c.15.15.15.390 0 .54z"/></svg><span class="name">Coordinates</span><span class="val">38.13,<br>-118.0177,</span></li>
    </ul>
    <div class="actions"><button class="more">MORE DETAILS</button></div>
  </main>
</div>
</body>
</html>
```

FILE: styles.css
```css
* { box-sizing: border-box; }
body { margin: 0; background: #fafafa; font-family: Roboto, "Liberation Sans", sans-serif; }
h1, h2, ul { margin: 0; padding: 0; font-weight: 400; list-style: none; }
svg { display: block; }
.screen { width: 1080px; height: 2340px; display: flex; flex-direction: column; overflow: hidden; }

.statusbar { height: 76px; background: #3700b3; display: flex; justify-content: space-between; align-items: flex-start; padding: 0 60px 0 65px; }
.clock { color: #ebe3f9; font-size: 34.700px; font-weight: 600; line-height: 40px; margin-top: 28px; }
.indicators { display: flex; margin-top: 30.667px; }
.indicators svg { height: 34.667px; flex: none; }
.wifi { width: 48.667px; }
.bt { width: 22px; margin-left: 14.667px; }
.volte { width: 33px; margin-left: 13.333px; }
.sig4 { width: 57.333px; margin-left: 14px; overflow: visible; }
.sig4 + .volte { margin-left: 13.667px; }
.sig { width: 40.333px; margin-left: 7px; }
.batt { width: 68px; margin-left: 15.667px; }
.vo { font: 700 36px "Open Sans", sans-serif; fill: #3700b3; }
.g4 { font: 600 46px Roboto, sans-serif; fill: #ebe3f9; }
.pct { font: 600 71px Roboto, sans-serif; fill: #fff; }

.appbar { height: 154px; background: #6200ee; display: flex; align-items: center; padding: 5px 44px 0; }
.appbar h1 { color: #fff; font-size: 55px; font-weight: 500; line-height: 64px; }

.map { height: 990px; flex: none; }
.mapart { width: 1080px; height: 990px; }
.lt { fill: #e7efcf; }
.gr { fill: #cee8bb; }
.dk { fill: #bbd6b4; }
.dk2 { fill: #b3cfad; }
.ice { fill: #efeee7; }
.rock { fill: #e6e3e3; }
.mauve { fill: #e0dad9; }
.wh { fill: #f6f6f6; }
.sand { fill: #f8eecf; }
.beige { fill: #ece1c3; }
.pink { fill: #fdf4ee; }
.wt { fill: #acdaff; }
.bd, .dash, .lim, .lim2 { fill: none; vector-effect: non-scaling-stroke; }
.bd { stroke: #828585; stroke-width: 1.3px; }
.dash { stroke: #929692; stroke-width: 1.3px; stroke-dasharray: 6 5; }
.lim { stroke: #79303e; stroke-width: 1.6px; stroke-dasharray: 16 6; }
.lim2 { stroke: #79303e; stroke-width: 1.6px; stroke-dasharray: 20 2; }
.lab { font: 400 26px Roboto, sans-serif; fill: #252525; stroke: rgba(255, 255, 255, .72); stroke-width: 7px; stroke-linejoin: round; paint-order: stroke; }
.sea { font: 400 41px Roboto, sans-serif; fill: #4f86c6; }
.halo { fill: #def0ff; }
.google { font: 700 51px Lato, sans-serif; }

.content { display: flex; flex-direction: column; height: 1108px; overflow: hidden; color: #000; }
.content h2 { font-size: 55px; line-height: 64px; padding: 36px 28px 30px; white-space: nowrap; }
.rows li { height: 137px; display: flex; align-items: center; padding: 0 22px; }
.rows svg { width: 68.750px; height: 68.750px; fill: #6200ee; flex: none; }
.name { font-size: 44px; line-height: 52px; color: #5e00e0; margin-left: 17px; padding-top: 5px; flex: 1; }
.val { font-size: 38.500px; line-height: 53px; color: #757575; text-align: right; padding-top: 4px; white-space: nowrap; letter-spacing: .15px; }
.val.time { margin-right: 9px; letter-spacing: .3px; }
.rows .coords svg { margin-top: -24px; }
.coords .val { padding-top: 15px; }
.actions { display: flex; justify-content: center; padding-top: 23px; }
.more { width: 311px; height: 133px; flex: none; border: 0; border-radius: 55px; background: #fff; color: #6200ee; font: 500 38.500px/45px Roboto, sans-serif; padding: 3px 0 0; white-space: nowrap; box-shadow: 0 5px 9px rgba(0, 0, 0, .28), 0 0 3px rgba(0, 0, 0, .12); }
```
